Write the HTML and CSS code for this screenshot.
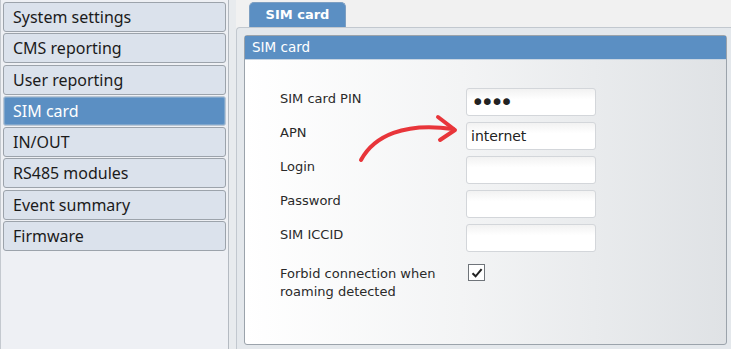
FILE: index.html
```html
<!DOCTYPE html>
<html lang="en">
<head>
    <meta charset="UTF-8">
    <title>SIM card</title>
    <link rel="stylesheet" href="styles.css">
</head>
<body>
    <div class="page">
        <ul class="sidebar">
            <li class="menuItem">System settings</li>
            <li class="menuItem">CMS reporting</li>
            <li class="menuItem">User reporting</li>
            <li class="menuItem active">SIM card</li>
            <li class="menuItem">IN/OUT</li>
            <li class="menuItem">RS485 modules</li>
            <li class="menuItem">Event summary</li>
            <li class="menuItem">Firmware</li>
        </ul>
        <div class="gap"></div>
        <div class="main">
            <div class="tabs">
                <span class="tab">SIM card</span>
            </div>
            <div class="outer">
                <div class="panel">
                    <div class="panelHead">SIM card</div>
                    <div class="form">
                        <label class="label">SIM card PIN</label>
                        <input class="field pin" type="password" value="1234">
                        <label class="label">APN</label>
                        <input class="field" type="text" value="internet">
                        <label class="label">Login</label>
                        <input class="field" type="text" value="">
                        <label class="label">Password</label>
                        <input class="field" type="password" value="">
                        <label class="label">SIM ICCID</label>
                        <input class="field" type="text" value="">
                        <label class="label check">Forbid connection when<br>roaming detected</label>
                        <span class="box">
                            <svg width="14" height="14" viewBox="0 0 14 14">
                                <path d="M2.5 7.2 L5.6 10.3 L11.6 3.2" fill="none" stroke="#222" stroke-width="2"/>
                            </svg>
                        </span>
                    </div>
                    <!-- red hint arrow -->
                    <svg class="arrow" width="120" height="60" viewBox="0 0 120 60">
                        <path d="M7 56 C20 32 50 18 99 25" fill="none" stroke="#e8353a" stroke-width="4" stroke-linecap="round"/>
                        <path d="M84 13 L101 26 L86 36" fill="none" stroke="#e8353a" stroke-width="4" stroke-linecap="round" stroke-linejoin="round"/>
                    </svg>
                </div>
            </div>
        </div>
    </div>
</body>
</html>
```

FILE: styles.css
```css
* {
    padding: 0;
    margin: 0;
    box-sizing: border-box;
}
ul,li{
    list-style: none;
}
body{
    background: #f1f1f1;
    overflow: hidden;
}
.page{
    display: flex;
    height: 349px;
}
.sidebar{
    width: 229px;
    padding: 2px 2px 0 2px;
    background: #eef0f4;
    border-left: 1px solid #c4c9cf;
    border-right: 1px solid #b4bac1;
}
.menuItem{
    height: 30px;
    margin-bottom: 1.3px;
    padding-left: 9px;
    line-height: 28px;
    font-family: "Noto Sans", sans-serif;
    font-size: 16px;
    color: #1b1b1b;
    background: #dbe2ec;
    border: 1px solid #9ca3ab;
    border-radius: 3px;
}
.menuItem.active{
    color: #fff;
    background: #5b8fc3;
    border-color: #b9c6d4;
    box-shadow: inset 0 0 0 1px #7fa6cc;
}
.gap{
    width: 7px;
    background: #e8ebee;
}
.main{
    flex: 1;
    display: flex;
    flex-direction: column;
    padding-top: 2px;
}
.tabs{
    display: flex;
    padding-left: 13px;
    height: 25px;
}
.tab{
    width: 97px;
    height: 25px;
    line-height: 24px;
    text-align: center;
    font-family: "DejaVu Sans", sans-serif;
    font-size: 13px;
    font-weight: bold;
    color: #fff;
    background: #5b8fc3;
    border: 1px solid #7d9fc2;
    border-bottom: none;
    border-radius: 5px 5px 0 0;
}
.outer{
    flex: 1;
    padding: 7px 4px 4px 7px;
    background: #e4e8ec;
    border-top: 1px solid #c2c8cf;
    border-left: 1px solid #c2c8cf;
    border-radius: 4px 0 0 0;
}
.panel{
    position: relative;
    height: 100%;
    background: linear-gradient(to right, #ffffff 0%, #f3f4f5 45%, #dfe2e5 100%);
    border: 1px solid #9ba3ab;
    border-radius: 3px;
    font-family: "DejaVu Sans", sans-serif;
    color: #222;
}
.panelHead{
    height: 24px;
    line-height: 23px;
    padding-left: 7px;
    font-size: 13.5px;
    color: #fff;
    background: #5b8fc3;
    border-bottom: 1px solid #c9d5e2;
}
.form{
    display: grid;
    grid-template-columns: 186px 130px;
    row-gap: 6px;
    padding: 28px 0 0 35px;
}
.label{
    font-size: 13px;
    line-height: 18px;
    padding-top: 2px;
    color: #2a2a2a;
}
.label.check{
    margin-top: 7px;
    padding-top: 0;
}
.field{
    width: 130px;
    height: 28px;
    padding: 0 4px;
    font-family: "DejaVu Sans", sans-serif;
    font-size: 14px;
    color: #222;
    background: linear-gradient(#f2f2f2, #ffffff 40%);
    border: 1px solid #d3d6da;
    border-radius: 3px;
    outline: none;
}
.field.pin{
    font-size: 23px;
    letter-spacing: -4px;
}
.box{
    display: flex;
    align-items: center;
    justify-content: center;
    width: 17px;
    height: 17px;
    margin: 6px 0 0 2px;
    background: #fff;
    border: 1px solid #6f747a;
}
.arrow{
    position: absolute;
    top: 68px;
    left: 109px;
}
```
